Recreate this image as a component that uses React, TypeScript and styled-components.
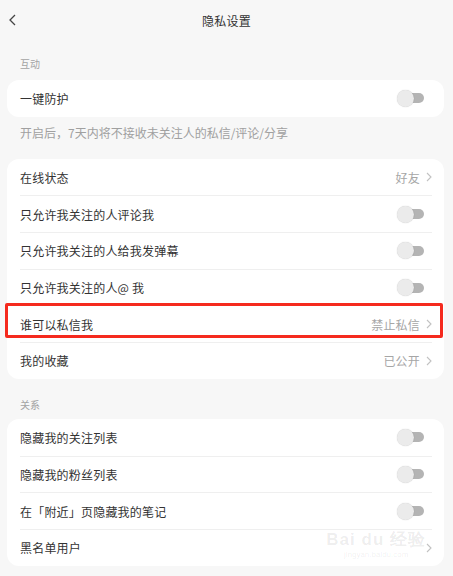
import React from 'react';
import styled, { createGlobalStyle } from 'styled-components';

const GlobalStyle = createGlobalStyle`
  html, body {
    margin: 0;
    padding: 0;
    background: #f7f7f7;
  }
  * {
    box-sizing: border-box;
  }
`;

const Page = styled.div`
  width: 453px;
  min-height: 576px;
  background: #f7f7f7;
  font-family: 'Noto Sans CJK SC', 'Noto Sans', sans-serif;
  color: #333;
`;

const Header = styled.header`
  height: 40px;
  display: grid;
  grid-template-columns: 60px 1fr 60px;
  align-items: center;
`;

const BackButton = styled.div`
  padding-left: 9px;
  display: flex;
  align-items: center;
`;

const Title = styled.h1`
  margin: 0;
  text-align: center;
  font-size: 12px;
  font-weight: 400;
  color: #333;
  letter-spacing: 0.3px;
`;

const SectionLabel = styled.div<{ top?: number; bottom?: number }>`
  padding: ${({ top = 16, bottom = 8 }) => `${top}px 20px ${bottom}px`};
  font-size: 10px;
  line-height: 16px;
  color: #a3a3a3;
`;

const Caption = styled.p`
  margin: 0;
  padding: 8px 20px 18px;
  font-size: 12px;
  line-height: 16px;
  color: #a0a0a0;
`;

const Card = styled.section`
  position: relative;
  margin: 0 9px 0 7px;
  background: #fff;
  border-radius: 12px;
`;

const Row = styled.div`
  position: relative;
  height: 36.7px;
  margin: 0 12px 0 13px;
  display: flex;
  align-items: center;
  justify-content: space-between;
  font-size: 12px;
  letter-spacing: 0.2px;

  & + & {
    border-top: 1px solid #efefef;
  }
`;

const Value = styled.span`
  display: flex;
  align-items: center;
  gap: 6px;
  color: #a6a6a6;
  font-size: 12px;
`;

const ToggleWrap = styled.span`
  position: relative;
  width: 27px;
  height: 17px;
  margin-right: 8px;
`;

const ToggleTrack = styled.span`
  position: absolute;
  top: 3.5px;
  left: 6px;
  right: 0;
  height: 10px;
  border-radius: 5px;
  background: #b4b4b4;
`;

const ToggleKnob = styled.span`
  position: absolute;
  top: 0;
  left: 0;
  width: 17px;
  height: 17px;
  border-radius: 50%;
  background: #ebebeb;
  box-shadow: 0 0 1px rgba(0, 0, 0, 0.25);
`;

const Highlight = styled.span`
  position: absolute;
  left: -15px;
  right: -11px;
  top: -3px;
  bottom: 4px;
  border: 3px solid #f52a1e;
  border-radius: 2px;
  pointer-events: none;
`;

const Watermark = styled.div`
  position: absolute;
  right: 18px;
  bottom: 6px;
  display: flex;
  flex-direction: column;
  align-items: center;
  color: rgba(0, 0, 0, 0.08);
  font-family: 'Liberation Sans', sans-serif;
  pointer-events: none;
`;

const WatermarkMain = styled.span`
  font-size: 17px;
  font-weight: 700;
  letter-spacing: 1px;
  line-height: 20px;
`;

const WatermarkSub = styled.span`
  font-size: 8px;
  line-height: 10px;
`;

const Chevron = () => (
  <svg width="6" height="10" viewBox="0 0 6 10">
    <polyline points="1,1 5,5 1,9" fill="none" stroke="#c2c2c2" strokeWidth="1.1" />
  </svg>
);

const Toggle = () => (
  <ToggleWrap>
    <ToggleTrack />
    <ToggleKnob />
  </ToggleWrap>
);

type Item = { label: string; value?: string; toggle?: boolean; highlight?: boolean };

const ItemRow = ({ label, value, toggle, highlight }: Item) => (
  <Row>
    <span>{label}</span>
    {toggle ? (
      <Toggle />
    ) : (
      <Value>
        {value}
        <Chevron />
      </Value>
    )}
    {highlight && <Highlight />}
  </Row>
);

const interaction: Item[] = [
  { label: '在线状态', value: '好友' },
  { label: '只允许我关注的人评论我', toggle: true },
  { label: '只允许我关注的人给我发弹幕', toggle: true },
  { label: '只允许我关注的人@ 我', toggle: true },
  { label: '谁可以私信我', value: '禁止私信', highlight: true },
  { label: '我的收藏', value: '已公开' },
];

const relations: Item[] = [
  { label: '隐藏我的关注列表', toggle: true },
  { label: '隐藏我的粉丝列表', toggle: true },
  { label: '在「附近」页隐藏我的笔记', toggle: true },
  { label: '黑名单用户', value: '' },
];

export default function App() {
  return (
    <>
      <GlobalStyle />
      <Page>
        <Header>
          <BackButton>
            <svg width="7" height="12" viewBox="0 0 7 12">
              <polyline points="6,1 1,6 6,11" fill="none" stroke="#444" strokeWidth="1.3" />
            </svg>
          </BackButton>
          <Title>隐私设置</Title>
          <span />
        </Header>

        <SectionLabel>互动</SectionLabel>
        <Card>
          <ItemRow label="一键防护" toggle />
        </Card>
        <Caption>开启后，7天内将不接收未关注人的私信/评论/分享</Caption>

        <Card>
          {interaction.map((item) => (
            <ItemRow key={item.label} {...item} />
          ))}
        </Card>

        <SectionLabel top={18} bottom={6}>
          关系
        </SectionLabel>
        <Card>
          {relations.map((item) => (
            <ItemRow key={item.label} {...item} />
          ))}
          <Watermark>
            <WatermarkMain>Bai du 经验</WatermarkMain>
            <WatermarkSub>jingyan.baidu.com</WatermarkSub>
          </Watermark>
        </Card>
      </Page>
    </>
  );
}
